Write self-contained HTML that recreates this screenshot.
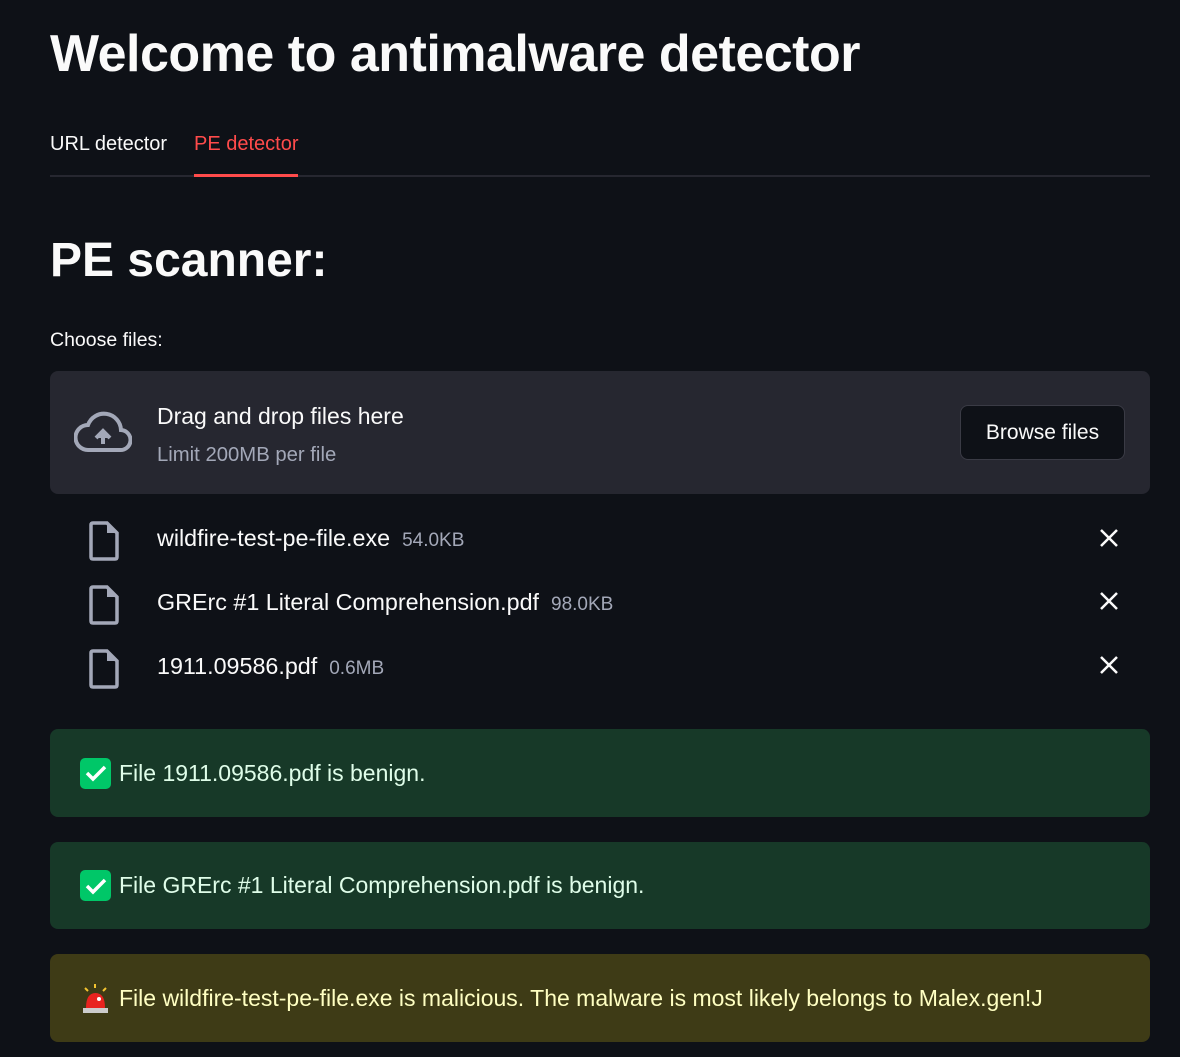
<!DOCTYPE html>
<html><head><style>
*{margin:0;padding:0;box-sizing:border-box}
body{width:1180px;height:1057px;background:#0e1117;color:#fafafa;font-family:"Liberation Sans",sans-serif;position:relative;overflow:hidden}
.a{position:absolute;white-space:nowrap}
h1{position:absolute;left:50px;top:24px;font-size:52px;font-weight:bold;letter-spacing:-0.5px}
.tab{font-size:20px;top:133px}
.bar{position:absolute;left:50px;top:175px;width:1100px;height:2px;background:#262730}
.drop{position:absolute;left:50px;top:371px;width:1100px;height:123px;background:#262730;border-radius:8px}
.btn{position:absolute;left:960px;top:405px;width:165px;height:55px;border:1px solid #3a3b45;border-radius:8px;background:#0e1117;font-size:21px;display:flex;align-items:center;justify-content:center}
.f{font-size:23.3px}
.sz{font-size:19px;color:#a3a8b8;margin-left:12px}
.al{position:absolute;left:50px;width:1100px;border-radius:8px;font-size:23px;display:flex;align-items:center;padding-left:30px}
.ok{background:#173928;color:#dffde9}
.wa{background:#3e3b16;color:#ffffc2}
.chk{width:31px;height:31px;background:#00c768;border-radius:5px;margin-right:8px;display:flex;align-items:center;justify-content:center}
</style></head><body>
<h1>Welcome to antimalware detector</h1>
<div class="a tab" style="left:50px">URL detector</div>
<div class="a tab" style="left:194px;color:#ff4b4b">PE detector</div>
<div class="bar"></div>
<div class="a" style="left:194px;top:174px;width:104px;height:3px;background:#ff4b4b"></div>
<div class="a" style="left:50px;top:233px;font-size:48px;font-weight:bold">PE scanner:</div>
<div class="a" style="left:50px;top:329px;font-size:19.5px">Choose files:</div>
<div class="drop"></div>
<svg class="a" style="left:74px;top:410px" width="58" height="44" viewBox="0 0 58 44"><path d="M14 40 H46 A10 10 0 0 0 47 20 A17 17 0 0 0 14 15 A12.5 12.5 0 0 0 14 40 Z" fill="none" stroke="#a3a8b8" stroke-width="4"/><path d="M29 34 V22 M22 28 L29 21 L36 28" stroke="#a3a8b8" stroke-width="4" fill="#a3a8b8"/></svg>
<div class="a" style="left:157px;top:403px;font-size:23px">Drag and drop files here</div>
<div class="a" style="left:157px;top:444px;font-size:20.3px;color:#a3a8b8">Limit 200MB per file</div>
<div class="btn">Browse files</div>
<svg class="a" style="left:88px;top:521px" width="32" height="40" viewBox="0 0 32 40"><path d="M3 4 Q3 2 5 2 H19 L29 12 V36 Q29 38 27 38 H5 Q3 38 3 36 Z" fill="none" stroke="#a3a8b8" stroke-width="3.5"/><path d="M19 2 V12 H29" fill="#a3a8b8"/></svg>
<svg class="a" style="left:88px;top:585px" width="32" height="40" viewBox="0 0 32 40"><path d="M3 4 Q3 2 5 2 H19 L29 12 V36 Q29 38 27 38 H5 Q3 38 3 36 Z" fill="none" stroke="#a3a8b8" stroke-width="3.5"/><path d="M19 2 V12 H29" fill="#a3a8b8"/></svg>
<svg class="a" style="left:88px;top:649px" width="32" height="40" viewBox="0 0 32 40"><path d="M3 4 Q3 2 5 2 H19 L29 12 V36 Q29 38 27 38 H5 Q3 38 3 36 Z" fill="none" stroke="#a3a8b8" stroke-width="3.5"/><path d="M19 2 V12 H29" fill="#a3a8b8"/></svg>
<div class="a f" style="left:157px;top:525px">wildfire-test-pe-file.exe<span class="sz">54.0KB</span></div>
<div class="a f" style="left:157px;top:589px">GRErc #1 Literal Comprehension.pdf<span class="sz">98.0KB</span></div>
<div class="a f" style="left:157px;top:653px">1911.09586.pdf<span class="sz">0.6MB</span></div>
<svg class="a" style="left:1099px;top:528px" width="20" height="20"><path d="M2 2L18 18M18 2L2 18" stroke="#fafafa" stroke-width="2.5"/></svg>
<svg class="a" style="left:1099px;top:591px" width="20" height="20"><path d="M2 2L18 18M18 2L2 18" stroke="#fafafa" stroke-width="2.5"/></svg>
<svg class="a" style="left:1099px;top:655px" width="20" height="20"><path d="M2 2L18 18M18 2L2 18" stroke="#fafafa" stroke-width="2.5"/></svg>
<div class="al ok" style="top:729px;height:88px"><div class="chk"><svg width="22" height="18"><path d="M2 9L8 15L20 3" stroke="#fff" stroke-width="3.5" fill="none"/></svg></div>File 1911.09586.pdf is benign.</div>
<div class="al ok" style="top:842px;height:87px"><div class="chk"><svg width="22" height="18"><path d="M2 9L8 15L20 3" stroke="#fff" stroke-width="3.5" fill="none"/></svg></div>File GRErc #1 Literal Comprehension.pdf is benign.</div>
<div class="al wa" style="top:954px;height:88px"><svg width="31" height="32" style="margin-right:8px" viewBox="0 0 31 32"><path d="M5 6l3 3M15 2v4M26 6l-3 3" stroke="#f4c430" stroke-width="2"/><path d="M6 26 Q6 11 15.5 11 Q25 11 25 26Z" fill="#e8231f"/><circle cx="19" cy="17" r="2" fill="#fff"/><rect x="3" y="26" width="25" height="5" fill="#ccc"/></svg>File wildfire-test-pe-file.exe is malicious. The malware is most likely belongs to Malex.gen!J</div>
</body></html>
